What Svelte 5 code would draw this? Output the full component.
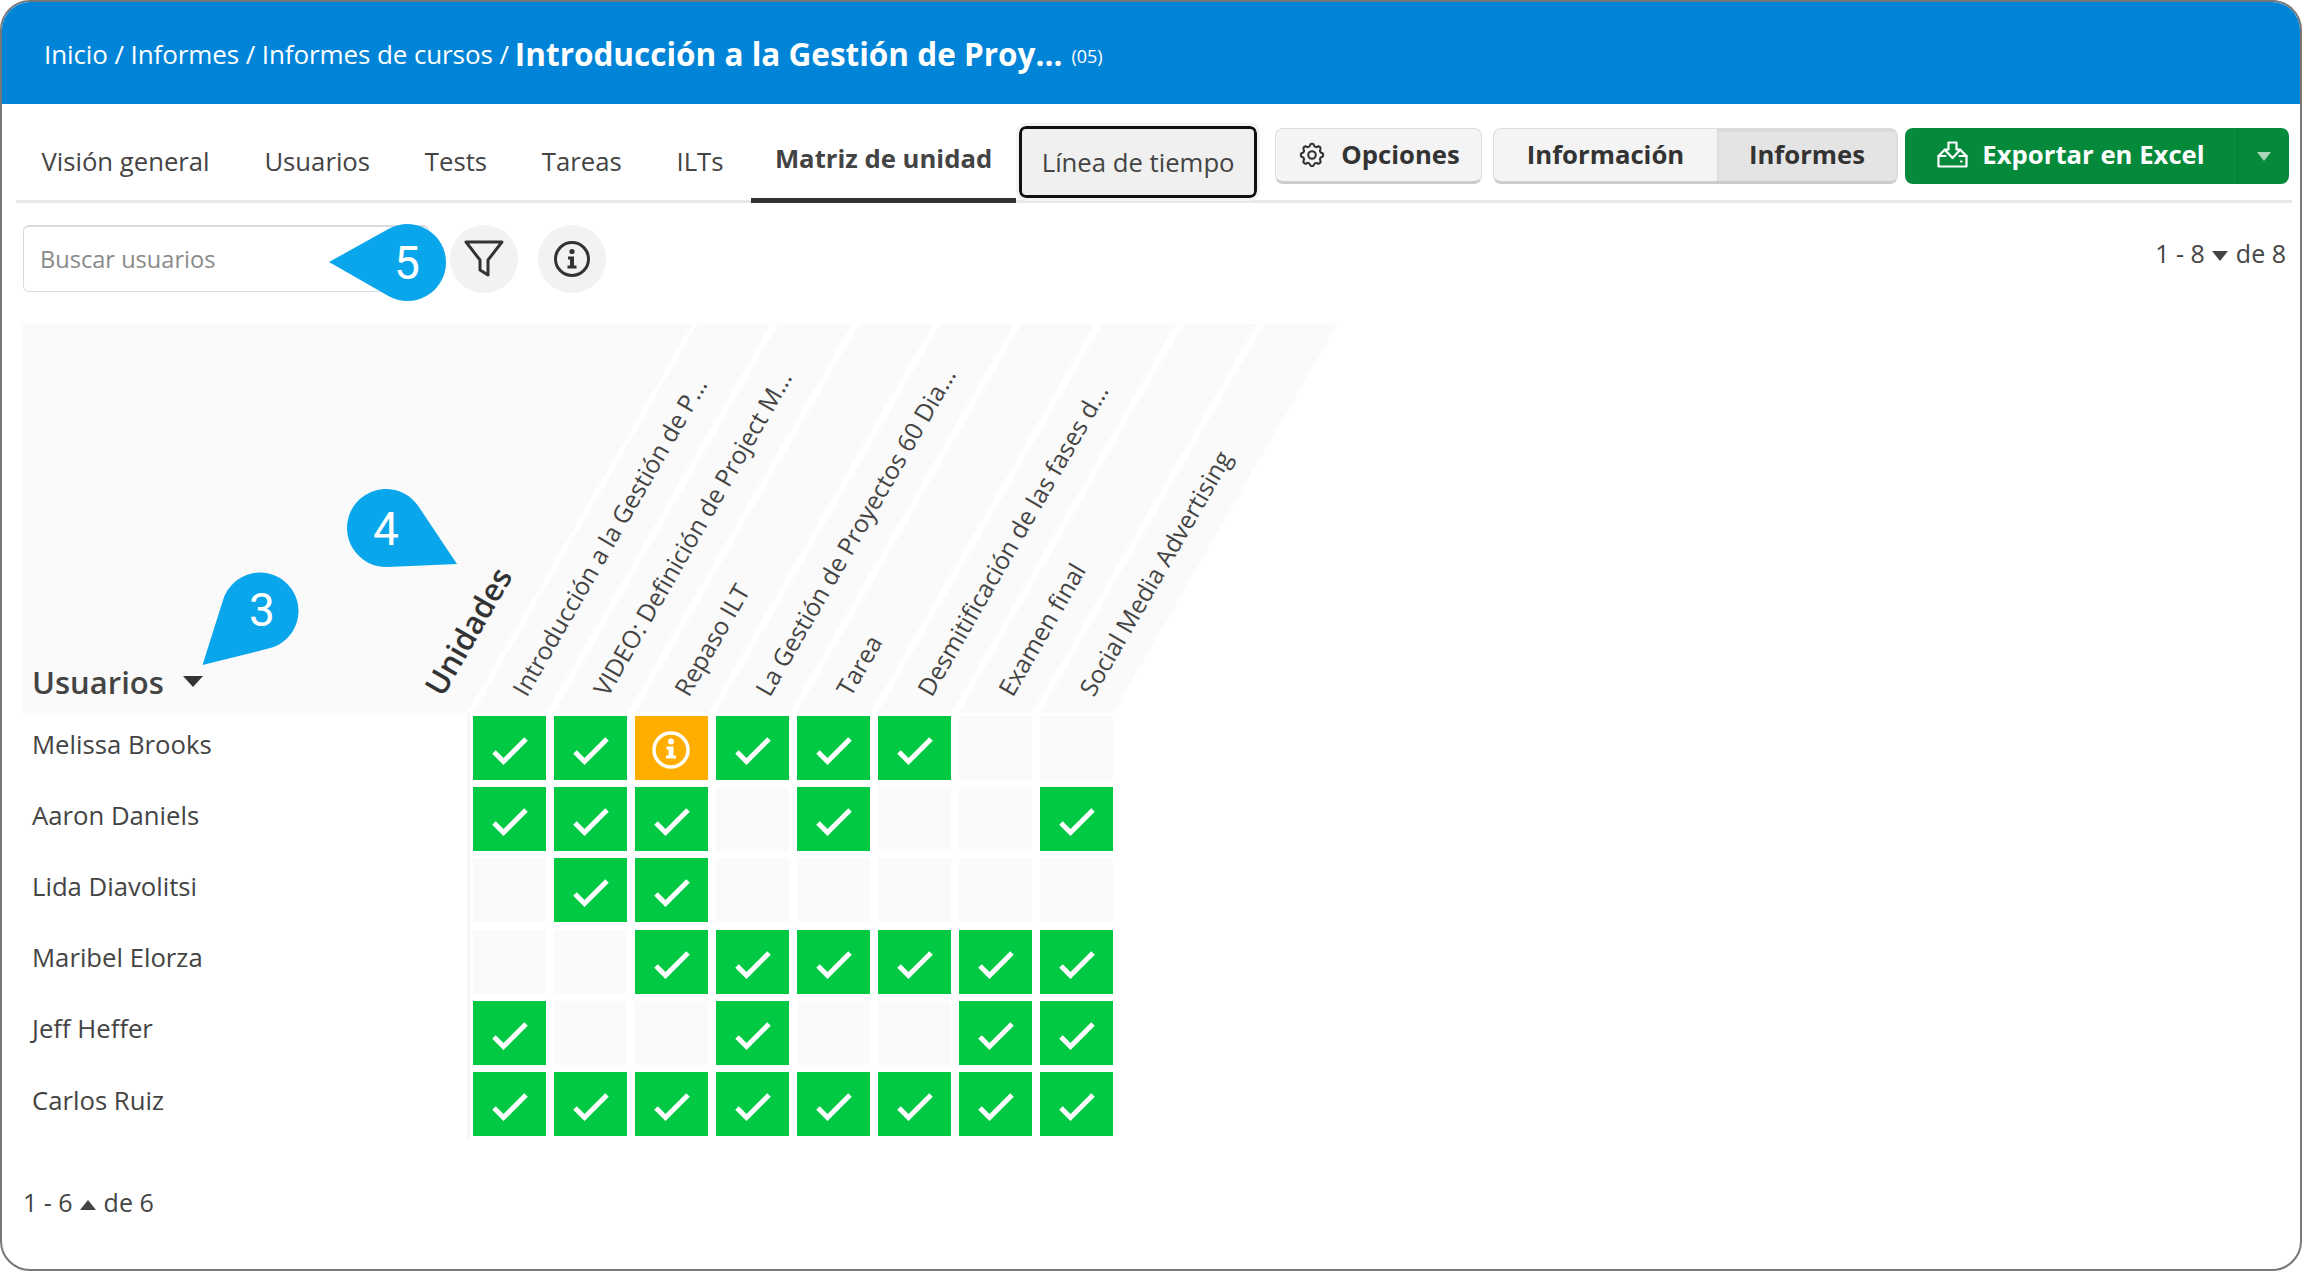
<script>
  const crumbs = 'Inicio / Informes / Informes de cursos /';
  const tabs = ['Visión general', 'Usuarios', 'Tests', 'Tareas', 'ILTs'];
  const units = [
    'Introducción a la Gestión de P...',
    'VIDEO: Definición de Project M...',
    'Repaso ILT',
    'La Gestión de Proyectos 60 Dia...',
    'Tarea',
    'Desmitificación de las fases d...',
    'Examen final',
    'Social Media Advertising'
  ];
  const rows = [
    ['Melissa Brooks', 'cciccc--'],
    ['Aaron Daniels', 'ccc-c--c'],
    ['Lida Diavolitsi', '-cc-----'],
    ['Maribel Elorza', '--cccccc'],
    ['Jeff Heffer', 'c--c--cc'],
    ['Carlos Ruiz', 'cccccccc']
  ];
  const callouts = [
    { n: 3, cx: 260, cy: 611, r: 38.5, tx: 202.5, ty: 665, lx: 262, ly: 609 },
    { n: 4, cx: 386, cy: 528, r: 39, tx: 457, ty: 564, lx: 386, ly: 528 },
    { n: 5, cx: 407.5, cy: 262.5, r: 38.5, tx: 329, ty: 262, lx: 407, ly: 262 }
  ];
  function drop(c) {
    const dx = c.tx - c.cx, dy = c.ty - c.cy;
    const d = Math.hypot(dx, dy);
    const a = Math.atan2(dy, dx);
    const b = Math.acos(c.r / d);
    const p1 = [c.cx + c.r * Math.cos(a - b), c.cy + c.r * Math.sin(a - b)];
    const p2 = [c.cx + c.r * Math.cos(a + b), c.cy + c.r * Math.sin(a + b)];
    return `M${c.tx} ${c.ty}L${p2[0]} ${p2[1]}A${c.r} ${c.r} 0 1 1 ${p1[0]} ${p1[1]}Z`;
  }
</script>

<div class="page">
  <header class="top">
    <span class="crumbs">{crumbs}</span>
    <strong class="title">Introducción a la Gestión de Proy...</strong>
    <small class="code">(05)</small>
  </header>

  <nav class="bar">
    <div class="tabs">
      {#each tabs as t}
        <span class="tab">{t}</span>
      {/each}
      <span class="tab active">Matriz de unidad</span>
      <span class="tab focus">Línea de tiempo</span>
    </div>
    <div class="actions">
      <button class="btn opts">
        <svg width="30" height="30" viewBox="0 0 24 24" fill="none" stroke="#333" stroke-width="1.700" stroke-linejoin="round">
          <path d="M10.325 4.317c.426-1.756 2.924-1.756 3.35 0a1.724 1.724 0 0 0 2.573 1.066c1.543-.94 3.31.826 2.37 2.37a1.724 1.724 0 0 0 1.065 2.572c1.756.426 1.756 2.924 0 3.35a1.724 1.724 0 0 0-1.066 2.573c.94 1.543-.826 3.31-2.37 2.37a1.724 1.724 0 0 0-2.572 1.065c-.426 1.756-2.924 1.756-3.35 0a1.724 1.724 0 0 0-2.573-1.066c-1.543.94-3.31-.826-2.37-2.37a1.724 1.724 0 0 0-1.065-2.572c-1.756-.426-1.756-2.924 0-3.35a1.724 1.724 0 0 0 1.066-2.573c-.94-1.543.826-3.31 2.37-2.37c1 .608 2.296.07 2.572-1.065z"/>
          <circle cx="12" cy="12" r="3"/>
        </svg>
        Opciones
      </button>
      <div class="seg">
        <span class="segitem">Información</span>
        <span class="segitem on">Informes</span>
      </div>
      <div class="export">
        <span class="exmain">
          <svg width="31" height="27" viewBox="0 0 31 27" fill="none" stroke="#fff" stroke-width="2.200" stroke-linejoin="round" stroke-linecap="round">
            <path d="M11.500 1.500h8v7h4L15.500 17l-8-8.500h4z"/>
            <path d="M6.500 10 1.500 15v10.500h28V15l-5-5"/>
            <path d="M1.500 15h7M22.500 15h7"/>
            <path d="M24 20.500h.5"/>
          </svg>
          Exportar en Excel
        </span>
        <span class="excaret"><i class="tri"></i></span>
      </div>
    </div>
  </nav>

  <section class="tools">
    <div class="search">Buscar usuarios</div>
    <span class="round">
      <svg width="40" height="40" viewBox="0 0 40 40" fill="none" stroke="#333" stroke-width="3" stroke-linejoin="round">
        <path d="M2 3h36L24 21v15l-8-5V21z"/>
      </svg>
    </span>
    <span class="round">
      <svg width="38" height="38" viewBox="0 0 38 38" fill="none">
        <circle cx="19" cy="19" r="16.500" stroke="#333" stroke-width="3"/>
        <circle cx="19" cy="11.500" r="2.600" fill="#333"/>
        <path d="M15 16.500h6v9h2.500v3h-9v-3H17v-6h-2z" fill="#333"/>
      </svg>
    </span>
    <span class="pager">1 - 8 <i class="dn"></i> de 8</span>
  </section>

  <section class="matrix">
    <div class="head">
      <div class="uhead"><span>Usuarios</span><i class="sort"></i></div>
      {#each units as u}
        <div class="col"><span class="label">{u}</span></div>
      {/each}
      <span class="unidades">Unidades</span>
    </div>
    {#each rows as [name, cells]}
      <div class="row">
        <div class="name">{name}</div>
        {#each cells.split('') as c}
          <div class="cell" class:ok={c === 'c'} class:warn={c === 'i'}>
            {#if c === 'c'}
              <svg width="73" height="63" viewBox="0 0 73 63" fill="none" stroke="#fff" stroke-width="5">
                <path d="M21 36l9.500 9.500L53 23"/>
              </svg>
            {:else if c === 'i'}
              <svg width="73" height="63" viewBox="0 0 73 63" fill="none">
                <circle cx="36" cy="34" r="17" stroke="#fff" stroke-width="3.500"/>
                <circle cx="36" cy="25.500" r="3" fill="#fff"/>
                <path d="M31.500 30.500h7v9h2.500v3H31v-3h2.500v-6h-2z" fill="#fff"/>
              </svg>
            {/if}
          </div>
        {/each}
      </div>
    {/each}
  </section>

  <footer class="foot">1 - 6 <i class="up"></i> de 6</footer>

  {#each callouts as c}
    <svg class="mark" width="2302" height="1271" viewBox="0 0 2302 1271">
      <path d={drop(c)} fill="#0aa6ec"/>
      <text x={c.lx} y={c.ly + 16.500} text-anchor="middle" fill="#fff" font-family="Roboto, sans-serif" font-size="46">{c.n}</text>
    </svg>
  {/each}
</div>

<style>
  :global(body) { margin: 0; background: #fff; }
  .page {
    position: relative;
    box-sizing: border-box;
    width: 2302px;
    height: 1271px;
    border: 2px solid #777;
    border-radius: 30px;
    overflow: hidden;
    background: #fff;
    color: #333;
    font-family: "Open Sans", sans-serif;
  }
  .top {
    height: 102px;
    background: #0084d8;
    color: #fff;
    display: flex;
    align-items: center;
    padding: 0 0 0 42px;
    box-sizing: border-box;
    font-size: 26px;
  }
  .crumbs { margin-right: 6px; margin-top: 2px; letter-spacing: -.1px; }
  .title { font-size: 31.500px; font-weight: 700; margin-right: 9px; }
  .code { font-size: 18px; margin-top: 6px; }

  .bar {
    margin: 0 8px 0 14px;
    height: 99px;
    box-sizing: border-box;
    border-bottom: 3px solid #e8e8e8;
    display: flex;
    justify-content: space-between;
  }
  .tabs { display: flex; align-items: stretch; height: 99px; margin-left: -2px; }
  .tab {
    display: flex;
    align-items: center;
    padding: 15px 27.400px 0;
    font-size: 25.700px;
    color: #444;
    box-sizing: border-box;
    height: 99px;
  }
  .tab.active {
    font-weight: 700;
    padding: 15px 24px 0;
    border-bottom: 5px solid #333;
  }
  .tab.focus {
    height: 72px;
    margin: 22px 0 0 3px;
    padding: 0 19.500px;
    background: #f0f0f0;
    border: 3px solid #111;
    border-radius: 7px;
    outline: 3px solid #f3f3f3;
  }
  .actions { display: flex; gap: 11px; padding: 24px 0 0; margin-right: 3px; height: 56px; }
  .btn, .seg {
    box-sizing: border-box;
    height: 56px;
    background: #f4f4f4;
    border: 1px solid #ddd;
    border-bottom: 3px solid #ccc;
    border-radius: 8px;
    font: 700 25.700px "Open Sans", sans-serif;
    color: #333;
  }
  .opts { width: 207px; display: flex; align-items: center; justify-content: center; gap: 14px; padding: 0 0 1px; }
  .seg { width: 405px; display: flex; overflow: hidden; }
  .segitem { display: flex; align-items: center; justify-content: center; width: 223px; padding-bottom: 1px; box-sizing: border-box; }
  .segitem.on { flex: 1; background: #e4e4e4; box-shadow: inset 0 2px 3px #d4d4d4; }
  .export {
    width: 384px;
    height: 56px;
    margin-left: -4px;
    display: flex;
    background: #058a3c;
    border-radius: 8px;
    color: #fff;
    font-weight: 700;
    font-size: 25.700px;
  }
  .exmain { flex: 1; display: flex; align-items: center; justify-content: center; gap: 14px; padding-bottom: 3px; box-sizing: border-box; }
  .excaret { width: 51px; display: flex; align-items: center; justify-content: center; border-left: 1px solid #077a38; }
  .tri { border: 7.500px solid transparent; border-top: 9px solid #a8d6b8; border-bottom: 0; }

  .tools {
    position: relative;
    display: flex;
    align-items: flex-start;
    margin-top: 22px;
    padding-left: 21px;
    height: 99px;
  }
  .search {
    box-sizing: border-box;
    width: 406px;
    height: 67px;
    border: 1px solid #d8dbe0;
    border-top: 2px solid #d8dbe0;
    border-radius: 6px;
    padding: 0 16px 1px;
    display: flex;
    align-items: center;
    color: #8a8a8a;
    font-size: 23.600px;
    margin-right: 21px;
  }
  .round {
    width: 68px;
    height: 68px;
    border-radius: 50%;
    background: #f2f2f2;
    display: flex;
    align-items: center;
    justify-content: center;
    margin-right: 20px;
  }
  .pager { margin-left: auto; margin-right: 14px; font-size: 25px; color: #444; line-height: 56px; }
  .dn, .up { display: inline-block; vertical-align: middle; border: 8px solid transparent; margin: 0 1px; }
  .dn { border-top: 10px solid #444; border-bottom: 0; }
  .up { border-bottom: 10px solid #444; border-top: 0; }

  .matrix { margin-left: 20px; }
  .head { position: relative; display: flex; height: 389px; }
  .uhead {
    box-sizing: border-box;
    width: 670px;
    margin-right: -225px;
    background: #fafafa;
    clip-path: polygon(0 0, 100% 0, 445px 100%, 0 100%);
    display: flex;
    align-items: flex-end;
    padding: 0 0 10px 10px;
    font-size: 31px;
    font-weight: 600;
    color: #444;
    flex-shrink: 0;
  }
  .sort { border: 10px solid transparent; border-top: 11px solid #333; border-bottom: 0; margin: 0 0 16px 19px; }
  .col { position: relative; width: 81px; flex-shrink: 0; }
  .col::before {
    content: "";
    position: absolute;
    inset: 0 2px 0 6px;
    background: #fafafa;
    transform: skewX(-30deg);
    transform-origin: left bottom;
  }
  .label {
    position: absolute;
    left: 65px;
    bottom: 12px;
    transform-origin: left bottom;
    transform: rotate(-60deg);
    white-space: nowrap;
    font-size: 24.600px;
    line-height: 30px;
    color: #444;
  }
  .unidades {
    position: absolute;
    left: 426px;
    bottom: 12px;
    transform-origin: left bottom;
    transform: rotate(-60deg);
    white-space: nowrap;
    font-size: 31px;
    font-weight: 600;
    line-height: 36px;
    color: #333;
  }
  .row { display: flex; height: 71.200px; }
  .name {
    box-sizing: border-box;
    width: 448px;
    border-right: 3px solid #f6f6f6;
    padding: 0 0 9px 10px;
    margin-right: 3px;
    display: flex;
    align-items: center;
    font-size: 25.700px;
    color: #444;
  }
  .cell {
    width: 73px;
    height: 64px;
    margin: 3px 8px 0 0;
    background: #fafafa;
  }
  .cell svg { display: block; }
  .ok { background: #02c944; }
  .warn { background: #ffae00; }

  .foot { position: absolute; left: 21px; top: 1183px; font-size: 25px; color: #444; }
  .mark { position: absolute; left: -2px; top: -2px; pointer-events: none; }
</style>
